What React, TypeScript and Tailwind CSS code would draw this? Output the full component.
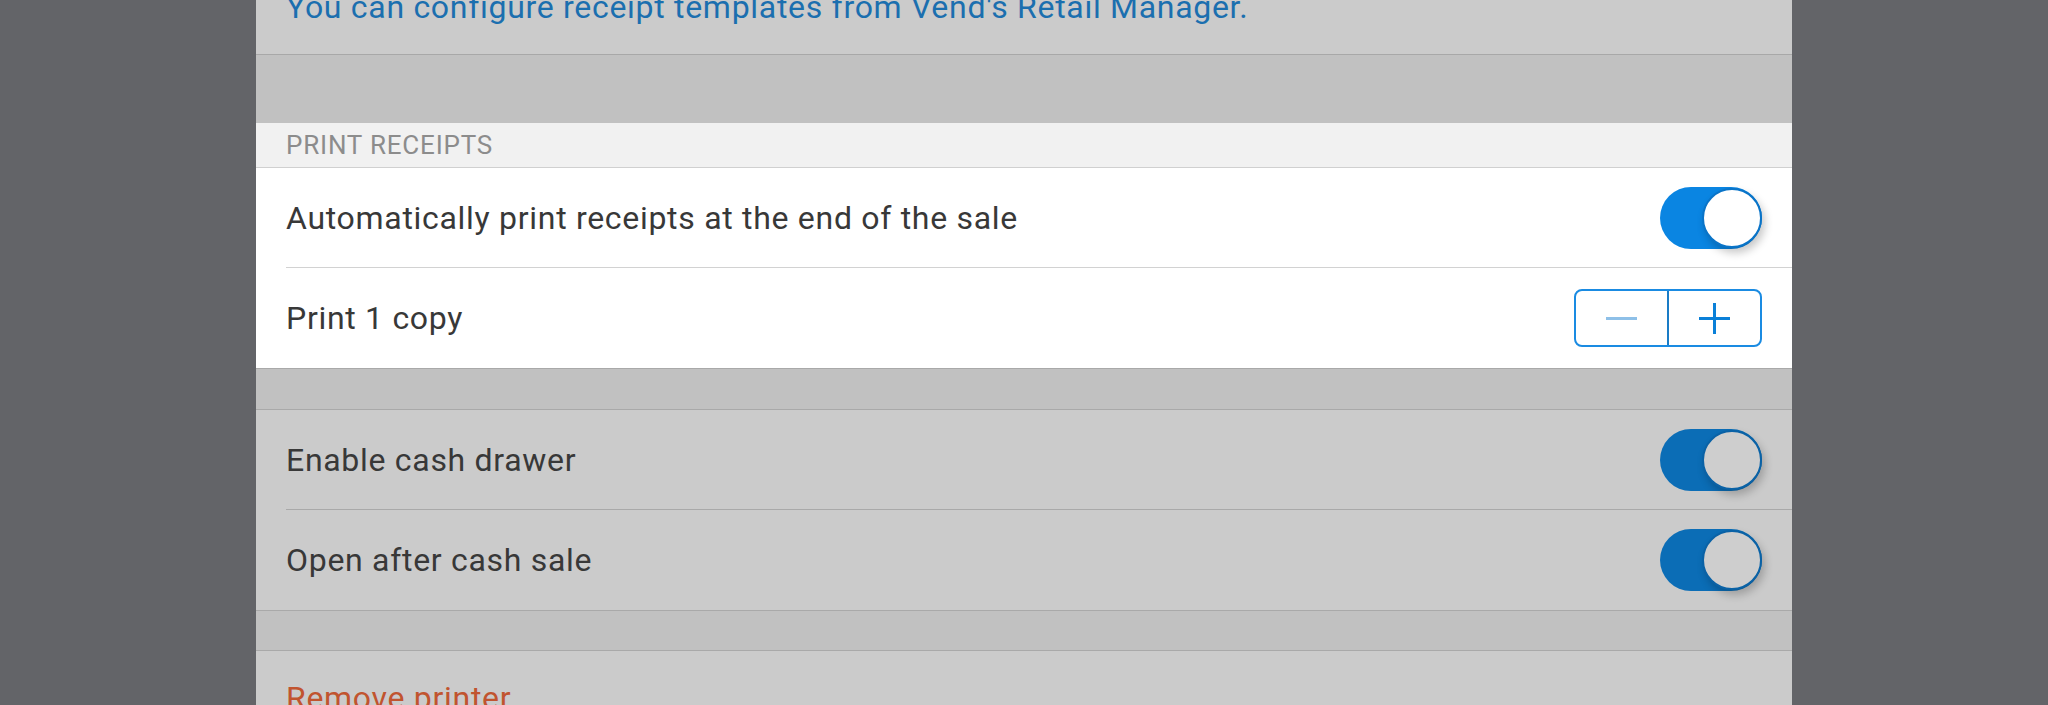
import React from 'react';

function Toggle({ dim }: { dim?: boolean }) {
  return (
    <div
      className={`relative w-[102px] h-[62px] rounded-full shrink-0 ${
        dim ? 'bg-[#0b6db6]' : 'bg-[#0a85e2]'
      }`}
    >
      <div
        className={`absolute right-0 top-[1px] w-[60px] h-[60px] rounded-full border-2 shadow-[3px_5px_8px_rgba(0,0,0,0.22)] ${
          dim ? 'bg-[#cecece] border-[#0a62a6]' : 'bg-white border-[#0a74c8]'
        }`}
      />
    </div>
  );
}

function Stepper() {
  return (
    <div className="flex w-[188px] h-[58px] rounded-[8px] border-2 border-[#1a8be2] shrink-0">
      <div className="flex-1 flex items-center justify-center">
        <span className="block w-[31px] h-[3px] bg-[#8ec0e8]" />
      </div>
      <div className="w-[2px] bg-[#1a7cc6]" />
      <div className="flex-1 flex items-center justify-center">
        <span className="relative block w-[31px] h-[31px]">
          <span className="absolute left-0 top-[14px] w-[31px] h-[3px] bg-[#0a80d8]" />
          <span className="absolute top-0 left-[14px] w-[3px] h-[31px] bg-[#0a80d8]" />
        </span>
      </div>
    </div>
  );
}

function Row({
  label,
  last,
  dim,
  children,
}: {
  label: string;
  last?: boolean;
  dim?: boolean;
  children?: React.ReactNode;
}) {
  return (
    <div className="pl-[30px] h-[100px]">
      <div
        className={`h-full flex items-center justify-between pr-[30px] ${
          last ? '' : dim ? 'border-b border-[#a9a9a9]' : 'border-b border-[#d2d2d2]'
        }`}
      >
        <span className="text-[32px] tracking-[0.7px] text-[#383838]">{label}</span>
        {children}
      </div>
    </div>
  );
}

export default function App() {
  return (
    <div
      className="h-[705px] w-full bg-[#636468] flex justify-center overflow-hidden"
      style={{ fontFamily: 'Roboto, "Liberation Sans", sans-serif' }}
    >
      <div className="w-[1536px] flex flex-col shrink-0">
        {/* info text */}
        <div className="h-[55px] bg-[#cbcbcb] border-b border-[#a8a8a8] px-[30px] overflow-hidden shrink-0">
          <p className="mt-[-11px] text-[32px] tracking-[0.7px] leading-[36px] text-[#1b6faf] whitespace-nowrap">
            You can configure receipt templates from Vend's Retail Manager.
          </p>
        </div>

        <div className="h-[68px] bg-[#c1c1c1] shrink-0" />

        {/* print receipts */}
        <div className="h-[45px] bg-[#f1f1f1] border-b border-[#d0d0d0] px-[30px] flex items-center shrink-0">
          <span className="text-[26px] text-[#8c8c8c] tracking-[0.8px]">PRINT RECEIPTS</span>
        </div>
        <div className="bg-white border-b border-[#a9a9a9] shrink-0">
          <Row label="Automatically print receipts at the end of the sale">
            <Toggle />
          </Row>
          <Row label="Print 1 copy" last>
            <Stepper />
          </Row>
        </div>

        <div className="h-[41px] bg-[#c1c1c1] border-b border-[#a9a9a9] shrink-0" />

        {/* cash drawer */}
        <div className="bg-[#cbcbcb] border-b border-[#a9a9a9] shrink-0">
          <Row label="Enable cash drawer" dim>
            <Toggle dim />
          </Row>
          <Row label="Open after cash sale" dim last>
            <Toggle dim />
          </Row>
        </div>

        <div className="h-[40px] bg-[#c1c1c1] border-b border-[#a9a9a9] shrink-0" />

        <div className="bg-[#cbcbcb] h-[100px] px-[30px] pb-[6px] flex items-center shrink-0">
          <span className="text-[32px] tracking-[0.7px] text-[#c1542f]">Remove printer</span>
        </div>
      </div>
    </div>
  );
}
